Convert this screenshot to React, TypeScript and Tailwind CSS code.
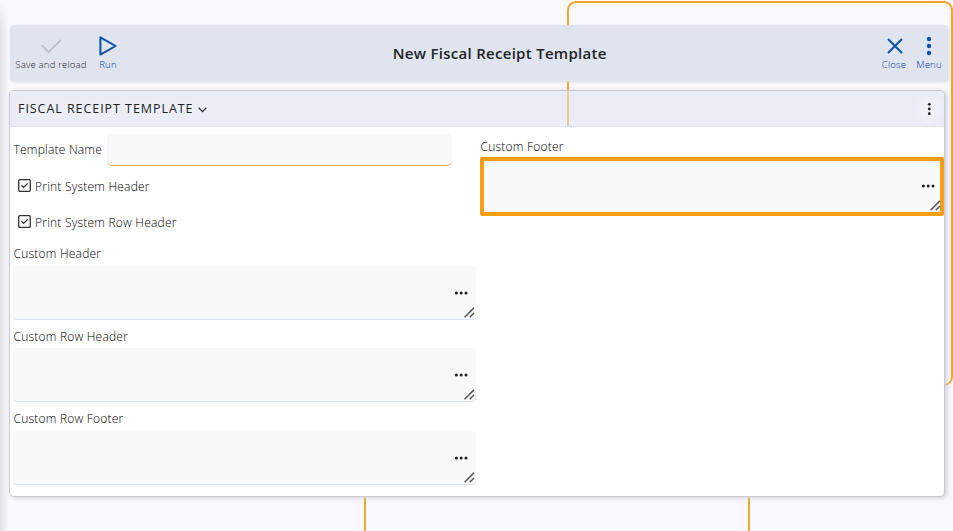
import React from "react";

const ORANGE = "#f5a52c";

function ToolButton({ label, tone, width, children }: { label: string; tone: string; width: string; children: React.ReactNode }) {
  return (
    <button className={`flex h-[56px] flex-col items-center pt-[10px] ${width} ${tone}`}>
      <span className="flex h-[22px] items-center justify-center">{children}</span>
      <span className="mt-px text-[9.6px] leading-[13px] font-light tracking-[0.16px] whitespace-nowrap">{label}</span>
    </button>
  );
}

function Dots({ className }: { className: string }) {
  return (
    <svg className={className} width="14" height="4" viewBox="0 0 14 4" fill="#202020">
      <circle cx="2.4" cy="2" r="1.5" />
      <circle cx="7.2" cy="2" r="1.5" />
      <circle cx="12" cy="2" r="1.5" />
    </svg>
  );
}

function Grip({ className }: { className: string }) {
  return (
    <svg className={className} width="11" height="11" viewBox="0 0 11 11" stroke="#555" strokeWidth="1.5" fill="none">
      <path d="M.6 10.3 9.9.9M5.7 10.3l4.3-4.3" />
    </svg>
  );
}

function TextArea() {
  return (
    <div className="relative h-[54px] w-[463px] rounded-[4px] border-b border-[#dbe3f0] bg-[#f7f9f8]">
      <Dots className="absolute top-[25px] right-[8px]" />
      <Grip className="absolute right-[1px] bottom-[1px]" />
    </div>
  );
}

function Check({ label }: { label: string }) {
  return (
    <label className="flex h-[36px] items-center pl-[5px]">
      <svg className="mb-[3px]" width="13" height="13" viewBox="0 0 13 13" fill="none" stroke="#303030">
        <rect x=".7" y=".7" width="11.6" height="11.6" rx="1.2" strokeWidth="1.3" />
        <path d="m3.4 6.3 2.2 2.1 4-4" strokeWidth="1.3" />
      </svg>
      <span className="ml-[4px]">{label}</span>
    </label>
  );
}

export default function App() {
  return (
    <div
      className="relative h-[531px] w-[953px] overflow-hidden bg-[#faf9ff] text-[12px] font-light tracking-[0.22px] text-black"
      style={{ fontFamily: '"Open Sans", "Noto Sans", sans-serif' }}
    >
      <div className="absolute inset-y-0 left-0 w-[9px] bg-linear-to-r from-[#e4e2e9] to-[#faf9ff]" />
      <div className="absolute top-0 left-0 h-[28px] w-[9px] bg-linear-to-b from-[#faf9ff] to-transparent" />
      <svg className="absolute inset-0" width="953" height="531" fill="none" stroke={ORANGE} strokeWidth="2">
        <rect x="568" y="2" width="384" height="383" rx="8" />
        <path d="M365 490V531M749 490V531" />
      </svg>

      <div className="relative flex flex-col pt-[25px] pl-[9px]">
        <header className="ml-px flex h-[56px] w-[938px] rounded-[4px] bg-[#e0e4ef] shadow-[1px_1px_3px_#d8d8e2]">
          <ToolButton label="Save and reload" tone="ml-[5px] text-[#24272f]" width="w-[72px]">
            <svg className="ml-[1px]" width="21" height="15" viewBox="0 0 21 15" fill="none" stroke="#bfc3cd" strokeWidth="2">
              <path d="m1 6.5 6.5 6.5L20 1" />
            </svg>
          </ToolButton>
          <ToolButton label="Run" tone="ml-[8px] text-[#00409c]" width="w-[26px]">
            <svg width="18" height="20" viewBox="0 0 18 20" fill="none" stroke="#0b51ad" strokeWidth="2" strokeLinejoin="round">
              <path d="M1.4 1.4v17.2L16.6 10Z" />
            </svg>
          </ToolButton>
          <h1 className="flex flex-1 items-center justify-center pr-[2.5px] text-[15px] font-semibold tracking-[0.29px] text-[#202426]">
            New Fiscal Receipt Template
          </h1>
          <ToolButton label="Close" tone="text-[#00409c]" width="w-[26px]">
            <svg className="ml-px" width="16" height="16" viewBox="0 0 16 16" fill="none" stroke="#0b51ad" strokeWidth="2">
              <path d="m1 1 14 14M15 1 1 15" />
            </svg>
          </ToolButton>
          <ToolButton label="Menu" tone="mr-[5px] ml-[8px] text-[#00409c]" width="w-[28px]">
            <svg width="6" height="20" viewBox="0 0 6 20" fill="#0b51ad">
              <circle cx="3" cy="3" r="2.2" />
              <circle cx="3" cy="10" r="2.2" />
              <circle cx="3" cy="17" r="2.2" />
            </svg>
          </ToolButton>
        </header>

        <section className="mt-[9px] h-[407px] w-[936px] rounded-[5px] border border-[#c9c9d0] bg-white shadow-[2px_1px_5px_#cfcfd9]">
          <div className="relative flex h-[36px] items-center justify-between rounded-t-[4px] border-b border-dotted border-[#cfd4e2] bg-[#eaedf6] pr-[13px] pl-[8px]">
            <span className="absolute top-0 left-[557px] h-[35px] w-[2px] bg-[#e9c993]" />
            <h2 className="mt-px flex items-center text-[12.5px] font-medium tracking-[0.94px] text-[#202020] [text-shadow:0_0_6px_white]">
              FISCAL RECEIPT TEMPLATE
              <svg className="mt-px ml-[5px]" width="9" height="6" viewBox="0 0 9 6" fill="none" stroke="#303030" strokeWidth="1.3">
                <path d="m.7.8 3.8 3.8L8.3.8" />
              </svg>
            </h2>
            <span className="flex size-[4px] items-center justify-center rounded-full bg-white/40 shadow-[0_0_12px_8px_rgba(255,255,255,.35)]">
              <svg className="shrink-0" width="4" height="14" viewBox="0 0 4 14" fill="#202020">
                <circle cx="2.3" cy="2.3" r="1.4" />
                <circle cx="2.3" cy="7" r="1.4" />
                <circle cx="2.3" cy="11.7" r="1.4" />
              </svg>
            </span>
          </div>

          <div className="flex">
            <div className="w-[470px] shrink-0 pt-[7px] pl-[3px]">
              <div className="mb-[3px] flex h-[32px]">
                <label className="w-[94px] pt-[7px] pl-[0.5px] leading-[18px] whitespace-nowrap">Template Name</label>
                <div className="h-[32px] w-[345px] rounded-[5px] border-b border-[#f5a52c] bg-[#f7f9f8]" />
              </div>
              <Check label="Print System Header" />
              <Check label="Print System Row Header" />
              <div className="flex h-[25px] items-center pl-[0.5px]">Custom Header</div>
              <TextArea />
              <div className="flex h-[28px] items-end pb-[2px] pl-[0.5px]">Custom Row Header</div>
              <TextArea />
              <div className="flex h-[29px] items-end pb-[3px] pl-[0.5px]">Custom Row Footer</div>
              <TextArea />
            </div>
            <div className="shrink-0 pt-[11px]">
              <div className="h-[19px] pl-[0.5px] leading-[18px]">Custom Footer</div>
              <div className="relative h-[59px] w-[464px] rounded-[2px] border-4 border-[#f59e16] bg-[#f7f9f8]">
                <Dots className="absolute top-[22.5px] right-[5px]" />
                <Grip className="absolute -right-px bottom-px" />
              </div>
            </div>
          </div>
        </section>
      </div>
    </div>
  );
}
